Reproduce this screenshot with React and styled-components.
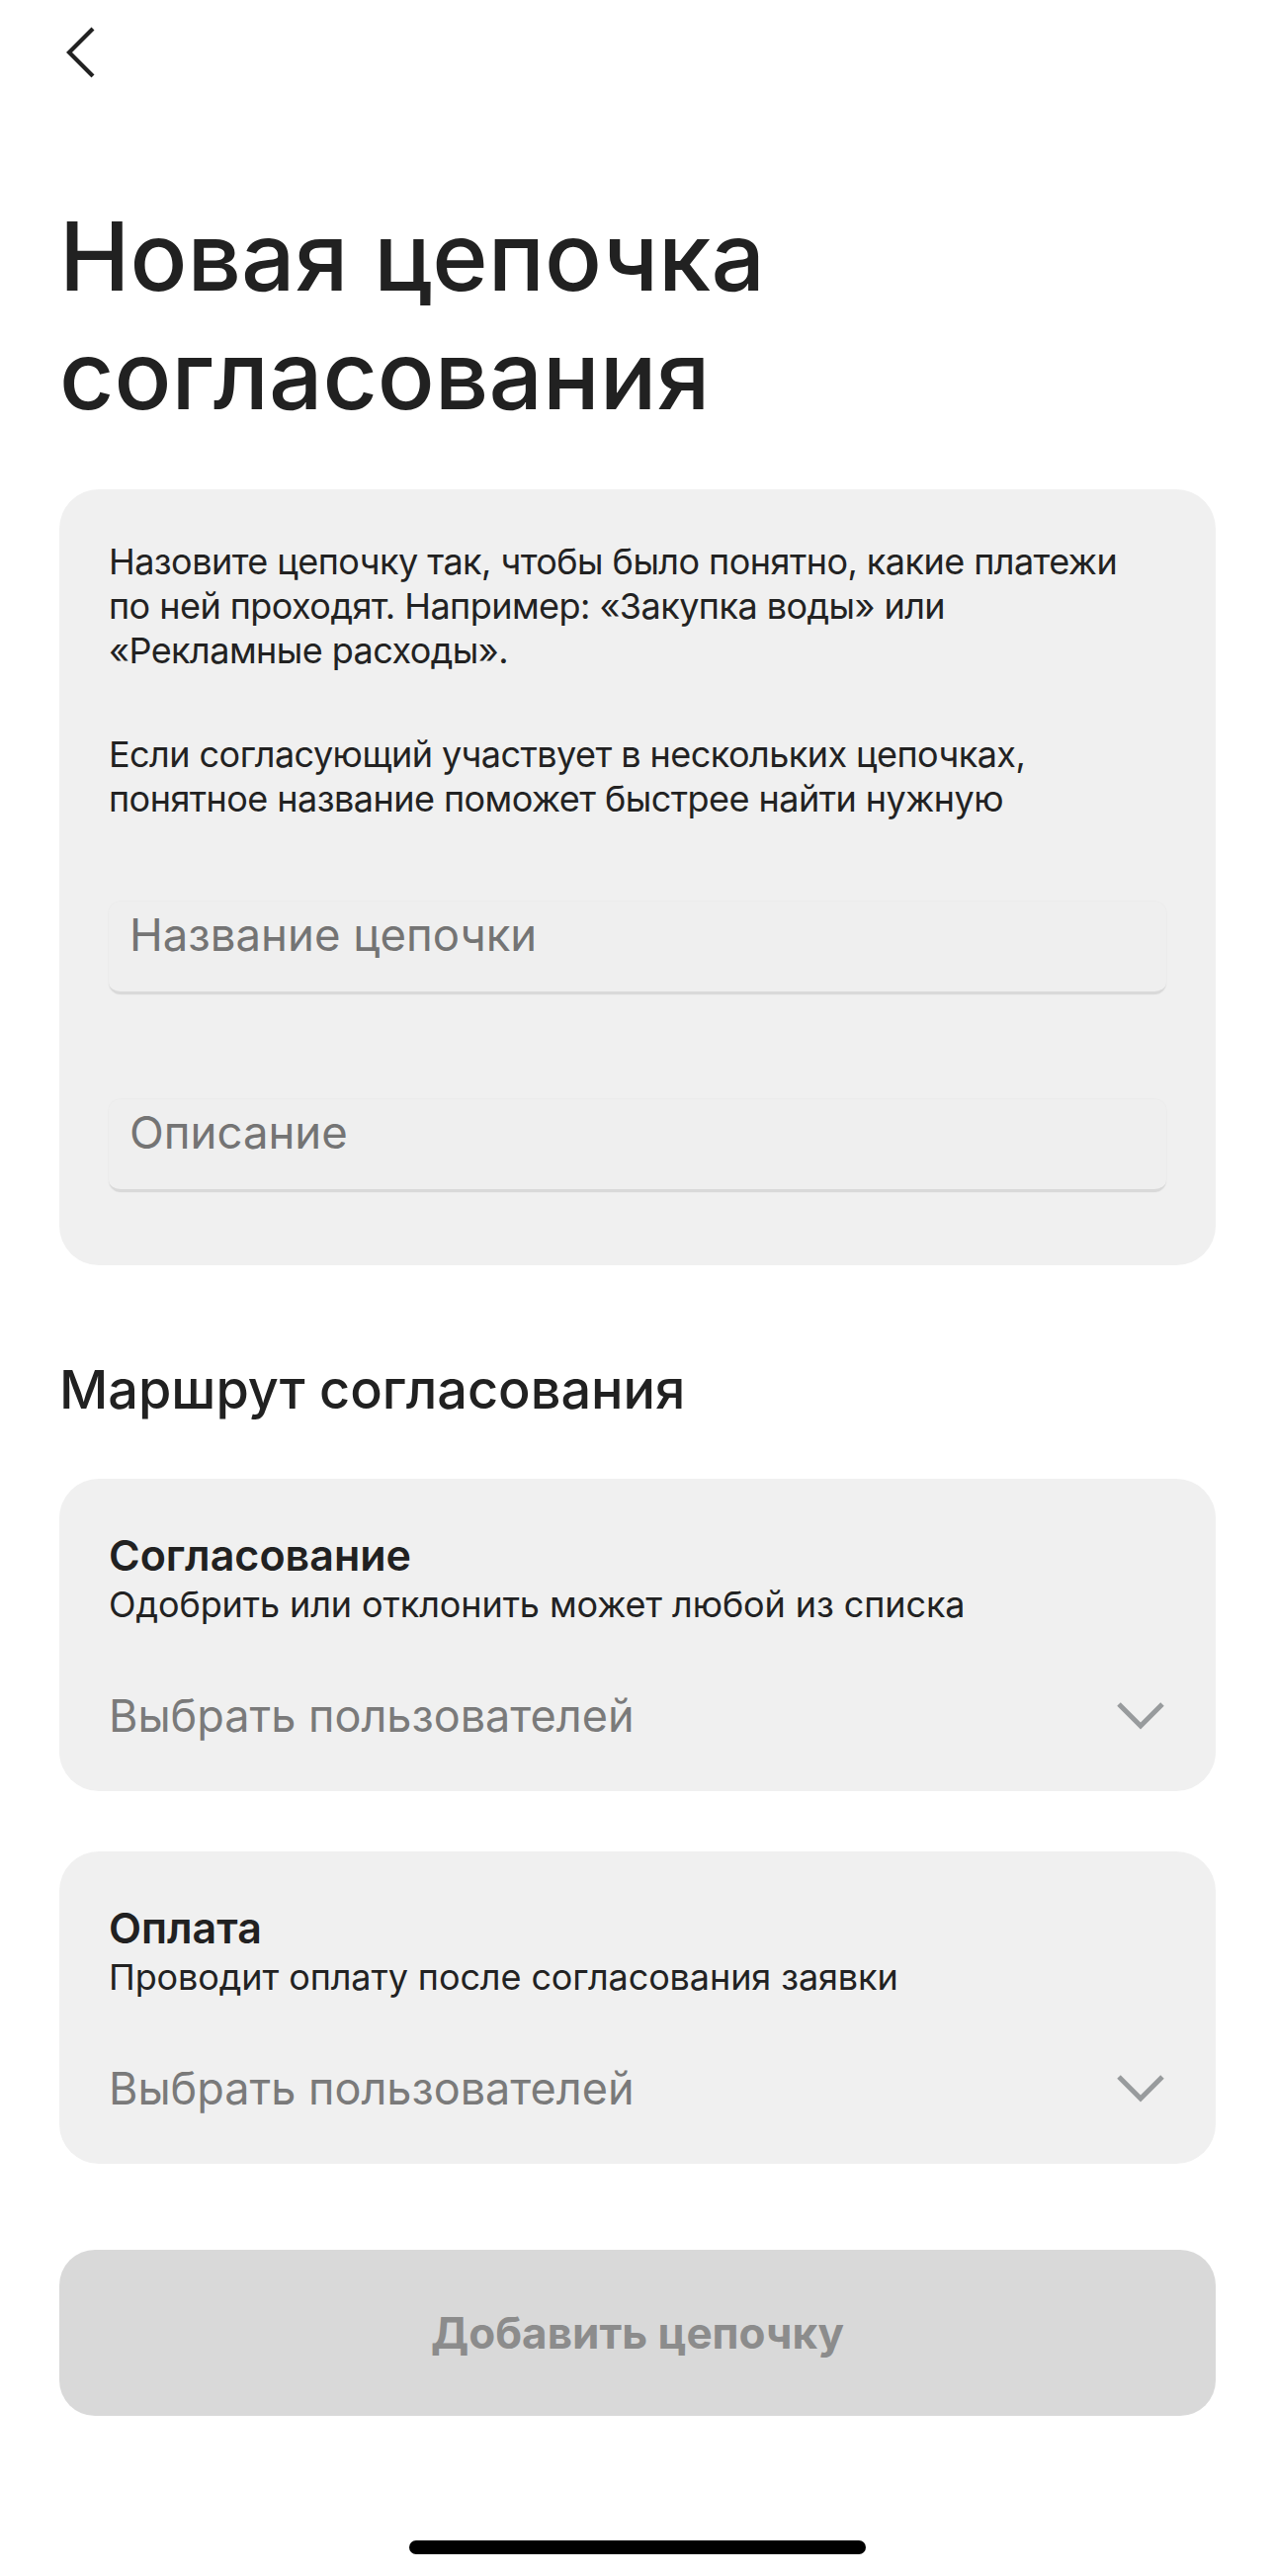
import React from 'react';
import styled, { createGlobalStyle } from 'styled-components';

const GlobalStyle = createGlobalStyle`
  html, body {
    margin: 0;
    padding: 0;
    background: #ffffff;
  }
  body {
    font-family: Inter, "Noto Sans", Roboto, sans-serif;
    color: #212121;
    -webkit-font-smoothing: antialiased;
  }
`;

const Page = styled.div`
  width: 1290px;
  min-height: 2606px;
  box-sizing: border-box;
  padding: 0 60px;
  display: flex;
  flex-direction: column;
`;

const Header = styled.div`
  height: 100px;
  padding-top: 27px;
  padding-left: 6px;
  box-sizing: border-box;

  svg {
    display: block;
  }
`;

const Title = styled.h1`
  margin: 99px 0 0;
  font-size: 96px;
  line-height: 120px;
  font-weight: 500;
  letter-spacing: 0;
  color: #212121;
`;

const Card = styled.div`
  margin-top: ${(p) => p.$gap}px;
  background: #f0f0f0;
  border-radius: 40px;
  padding: ${(p) => p.$pad};
  display: flex;
  flex-direction: column;
`;

const Hint = styled.p`
  margin: 0 0 ${(p) => p.$after || 0}px;
  font-size: 36px;
  line-height: 45px;
  letter-spacing: -0.55px;
  font-weight: 400;
  color: #222;
`;

const Field = styled.div`
  margin-top: ${(p) => p.$gap}px;
  height: 94px;
  box-sizing: border-box;
  border-radius: 12px;
  background: #efefef;
  border-bottom: 3px solid #d9d9d9;
  box-shadow: 0 0 0 1px rgba(0, 0, 0, 0.015);
  padding: 8px 21px 0;
  font-size: 45.5px;
  line-height: 52px;
  color: #747474;
`;

const SectionTitle = styled.h2`
  margin: 95px 0 0;
  font-size: 54px;
  line-height: 62px;
  font-weight: 500;
  color: #212121;
`;

const StepTitle = styled.div`
  font-size: 43px;
  line-height: 48px;
  font-weight: 600;
  color: #212121;
`;

const StepText = styled.div`
  margin-top: 4px;
  font-size: 36px;
  line-height: 44px;
  letter-spacing: -0.1px;
  color: #222;
`;

const SelectRow = styled.div`
  margin-top: 65px;
  display: flex;
  align-items: center;
  justify-content: space-between;
  font-size: 45px;
  line-height: 52px;
  color: #7a7a7a;

  svg {
    display: block;
    margin-right: -2px;
  }
`;

const SubmitButton = styled.button`
  margin-top: 87px;
  height: 168px;
  width: 100%;
  border: none;
  border-radius: 36px;
  background: #d9d9d9;
  color: #8c8c8c;
  font-family: Inter, "Noto Sans", sans-serif;
  font-size: 44px;
  font-weight: 700;
  cursor: default;
`;

const HomeBar = styled.div`
  margin: 126px auto 0;
  width: 462px;
  height: 14px;
  border-radius: 7px;
  background: #000;
`;

function BackIcon() {
  return (
    <svg width="32" height="52" viewBox="0 0 32 52">
      <polyline points="28,2 4,26 28,50" fill="none" stroke="#212121" strokeWidth="4.2" />
    </svg>
  );
}

function ChevronDown() {
  return (
    <svg width="52" height="32" viewBox="0 0 52 32">
      <polyline points="4,4 26,26 48,4" fill="none" stroke="#989b9d" strokeWidth="5" />
    </svg>
  );
}

const steps = [
  { title: 'Согласование', text: 'Одобрить или отклонить может любой из списка', gap: 59 },
  { title: 'Оплата', text: 'Проводит оплату после согласования заявки', gap: 61 },
];

export default function App() {
  return (
    <>
      <GlobalStyle />
      <Page>
        <Header>
          <BackIcon />
        </Header>

        <Title>
          Новая цепочка
          <br />
          согласования
        </Title>

        <Card $gap={56} $pad="51px 50px 74px">
          <Hint $after={60}>
            Назовите цепочку так, чтобы было понятно, какие платежи по ней проходят. Например: «Закупка воды» или «Рекламные расходы».
          </Hint>
          <Hint>
            Если согласующий участвует в нескольких цепочках, понятное название поможет быстрее найти нужную
          </Hint>
          <Field $gap={81}>Название цепочки</Field>
          <Field $gap={106}>Описание</Field>
        </Card>

        <SectionTitle>Маршрут согласования</SectionTitle>

        {steps.map((s) => (
          <Card key={s.title} $gap={s.gap} $pad="53px 52px 50px 50px">
            <StepTitle>{s.title}</StepTitle>
            <StepText>{s.text}</StepText>
            <SelectRow>
              <span>Выбрать пользователей</span>
              <ChevronDown />
            </SelectRow>
          </Card>
        ))}

        <SubmitButton>Добавить цепочку</SubmitButton>

        <HomeBar />
      </Page>
    </>
  );
}
